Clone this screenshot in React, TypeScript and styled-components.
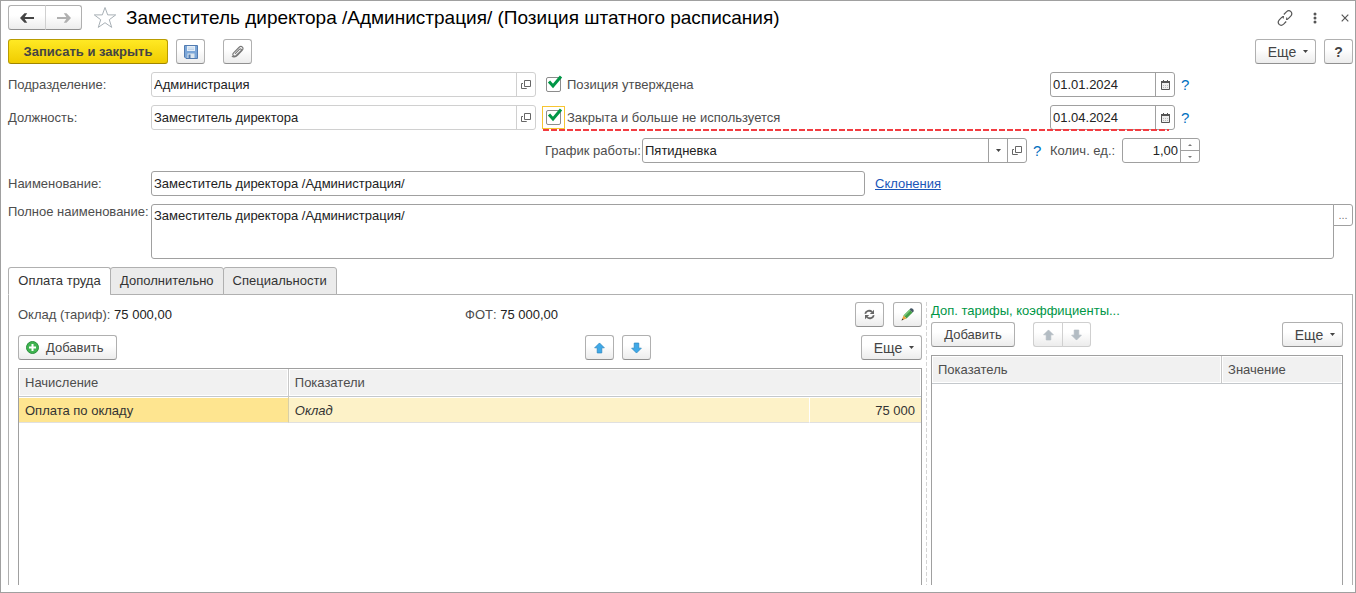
import React, { useState } from "react";
import styled, { createGlobalStyle, css } from "styled-components";

const GlobalStyle = createGlobalStyle`
  *, *::before, *::after { box-sizing: border-box; }
  body {
    margin: 0;
    background: #fff;
    color: #333;
    font: 13px/16px "Liberation Sans", Arial, sans-serif;
  }
  button, input, select, textarea { font: inherit; color: inherit; margin: 0; }
`;

const Window = styled.main`
  display: flex;
  flex-direction: column;
  min-height: 100vh;
  padding: 4px 2px 7px 7px;
  border: 1px solid #a0a0a0;
`;

const TitleBar = styled.header`
  display: flex;
  align-items: center;
  height: 25px;
`;

const Title = styled.h1`
  flex: 1;
  margin: 0 0 0 9px;
  color: #000;
  font-size: 19px;
  line-height: 24px;
  font-weight: 400;
  white-space: nowrap;
`;

const WindowTools = styled.div`
  display: flex;
  align-items: center;
  gap: 14px;
`;

const PlainButton = styled.button`
  display: flex;
  align-items: center;
  justify-content: center;
  width: 16px;
  height: 20px;
  padding: 0;
  border: 0;
  background: none;
`;

const CommandBar = styled.div`
  display: flex;
  align-items: center;
  gap: 8px;
  margin-top: 9px;
`;

const Spacer = styled.div<{ $width?: number }>`
  ${(p) => (p.$width ? `width: ${p.$width}px;` : "flex: 1;")}
`;

const Button = styled.button<{ $width: number; $primary?: boolean; $bold?: boolean }>`
  display: inline-flex;
  align-items: center;
  justify-content: center;
  flex: none;
  gap: 7px;
  width: ${(p) => p.$width}px;
  height: 25px;
  padding: 0;
  border: 1px solid #b0b0b0;
  border-bottom-color: #909090;
  border-radius: 3px;
  background: linear-gradient(#fff 40%, #ececec);
  color: #444;
  white-space: nowrap;
  ${(p) => p.$bold && css`font-size: 14px; font-weight: 700;`}
  ${(p) =>
    p.$primary &&
    css`
      border-color: #b99c00;
      border-bottom-color: #a08600;
      background: linear-gradient(#ffe924, #f0cc00);
      font-weight: 700;
    `}
`;

const AddButton = styled(Button)`
  justify-content: flex-start;
  padding-left: 7px;
`;

const ButtonPair = styled.div<{ $faded?: boolean }>`
  display: flex;
  flex: none;
  & > button + button { border-left-color: #d0d0d0; margin-left: -1px; border-radius: 0 3px 3px 0; }
  & > button:first-child { border-radius: 3px 0 0 3px; border-right-color: #d0d0d0; }
  ${(p) => p.$faded && css`& > button { border-color: #cfcfcf; }`}
`;

const Form = styled.form`
  display: flex;
  flex-direction: column;
  gap: 8px;
  margin-top: 8px;
`;

const FormGrid = styled.div`
  display: grid;
  grid-template-columns: minmax(0, 528fr) minmax(0, 658fr);
  column-gap: 6px;
  row-gap: 8px;
  padding-right: 153px;
`;

const FormRow = styled.div`
  display: flex;
  align-items: center;
  min-width: 0;
`;

const SettingRow = styled(FormRow)<{ $invalid?: boolean }>`
  position: relative;
  padding-left: 3px;
  ${(p) =>
    p.$invalid &&
    css`
      &::after {
        content: "";
        position: absolute;
        left: 1px;
        right: 31px;
        bottom: -1px;
        height: 2px;
        background: repeating-linear-gradient(90deg, #f23c41 0 6px, transparent 6px 8px);
      }
    `}
`;

const ScheduleRow = styled(FormRow)`
  grid-column: 2;
  padding-left: 3px;
`;

const NameRow = styled.div`
  display: grid;
  grid-template-columns: minmax(0, 857fr) minmax(0, 478fr);
  column-gap: 10px;
  align-items: center;
`;

const FullNameRow = styled(FormRow)`
  align-items: flex-start;
`;

const Label = styled.label<{ $width?: number }>`
  flex: none;
  width: ${(p) => (p.$width ? `${p.$width}px` : "auto")};
  color: #4d4d4d;
  white-space: nowrap;
`;

const Field = styled.div<{ $muted?: boolean; $width?: number }>`
  --edge: ${(p) => (p.$muted ? "#d0d0d0" : "#a0a0a0")};
  display: flex;
  ${(p) => (p.$width ? `flex: none; width: ${p.$width}px;` : "flex: 1;")}
  min-width: 0;
  height: 25px;
  border: 1px solid var(--edge);
  border-radius: 3px;
  background: #fff;
`;

const controlText = css`
  flex: 1;
  min-width: 0;
  padding: 0 2px;
  border: 0;
  outline: 0;
  background: none;
  color: #222;
`;

const TextInput = styled.input<{ $right?: boolean }>`
  ${controlText}
  text-align: ${(p) => (p.$right ? "right" : "left")};
`;

const Select = styled.select`
  ${controlText}
  appearance: none;
`;

const FieldButton = styled.button`
  display: flex;
  align-items: center;
  justify-content: center;
  flex: none;
  width: 19px;
  padding: 0;
  border: 0;
  border-left: 1px solid var(--edge);
  background: none;
`;

const Stepper = styled.div`
  display: flex;
  flex-direction: column;
  flex: none;
  width: 19px;
  border-left: 1px solid var(--edge);
`;

const StepButton = styled.button`
  display: flex;
  flex: 1;
  align-items: center;
  justify-content: center;
  padding: 0;
  border: 0;
  background: none;
  & + & { border-top: 1px solid var(--edge); }
`;

const TextArea = styled.textarea`
  flex: 1;
  min-width: 0;
  height: 55px;
  padding: 3px 2px;
  border: 1px solid #a0a0a0;
  border-radius: 3px 0 3px 3px;
  outline: 0;
  resize: none;
  color: #222;
`;

const AreaButton = styled.button`
  width: 20px;
  height: 22px;
  margin-left: -1px;
  padding: 0;
  border: 1px solid #a0a0a0;
  border-radius: 0 3px 3px 0;
  background: #fff;
  color: #777;
  font-size: 11px;
`;

const CheckLabel = styled.label`
  display: flex;
  flex: 1;
  align-items: center;
  gap: 6px;
  padding-left: 1px;
  color: #4d4d4d;
  white-space: nowrap;
`;

const CheckBox = styled.span<{ $focused?: boolean }>`
  position: relative;
  display: flex;
  width: 15px;
  height: 15px;
  ${(p) => p.$focused && css`outline: 1px solid #f7c531; outline-offset: 3px;`}
  input {
    appearance: none;
    width: 15px;
    height: 15px;
    border: 1px solid #8c8c8c;
    border-radius: 2px;
    outline: 0;
  }
  svg { position: absolute; left: 1px; top: -2px; pointer-events: none; }
  input:not(:checked) + svg { display: none; }
`;

const EndGroup = styled.div`
  display: flex;
  align-items: center;
  justify-content: space-between;
  flex: none;
  width: 150px;
`;

const HelpLink = styled.a`
  flex: 1;
  padding-left: 6px;
  color: #0070c0;
  font-size: 15px;
  text-decoration: none;
`;

const ScheduleHelp = styled(HelpLink)`
  flex: none;
  width: 23px;
`;

const Link = styled.a`
  color: #1a56b8;
`;

const Tabs = styled.div`
  display: flex;
  margin-top: 8px;
`;

const Tab = styled.button<{ $active: boolean }>`
  position: relative;
  height: 28px;
  min-width: 103px;
  margin: 0 -1px -1px 0;
  padding: 0 9px;
  border: 1px solid #b0b0b0;
  border-radius: 3px 3px 0 0;
  background: #ebebeb;
  color: #333;
  ${(p) => p.$active && css`border-bottom-color: #fff; background: #fff;`}
`;

const TabPanel = styled.section`
  display: grid;
  flex: 1;
  grid-template-columns: minmax(0, 904fr) 9px minmax(0, 412fr);
  padding: 7px 9px 0;
  border: 1px solid #b0b0b0;
  border-bottom: 0;
`;

const Pane = styled.div`
  display: flex;
  flex-direction: column;
  min-width: 0;
`;

const Splitter = styled.div`
  width: 1px;
  margin-left: 4px;
  background: repeating-linear-gradient(#d4d4d4 0 4px, transparent 4px 6px);
`;

const Totals = styled.div`
  display: grid;
  grid-template-columns: minmax(0, 447fr) minmax(0, 390fr) 67px;
  align-items: center;
  height: 25px;
`;

const Total = styled.span`
  color: #4d4d4d;
  b { color: #222; font-weight: 400; }
`;

const TotalButtons = styled.div`
  display: flex;
  justify-content: space-between;
`;

const PaneBar = styled.div<{ $top: number }>`
  display: flex;
  gap: 8px;
  margin-top: ${(p) => p.$top}px;
`;

const BarSide = styled.div<{ $grow: number; $end?: boolean }>`
  display: flex;
  flex: ${(p) => p.$grow} 1 0;
  justify-content: ${(p) => (p.$end ? "flex-end" : "flex-start")};
`;

const PaneTitle = styled.h2`
  margin: 0;
  color: #009646;
  font-size: 13px;
  line-height: 18px;
  font-weight: 400;
`;

const TableFrame = styled.div`
  flex: 1;
  margin-top: 8px;
  border: 1px solid #a0a0a0;
  border-bottom: 0;
`;

const Table = styled.table`
  width: 100%;
  border-collapse: separate;
  border-spacing: 0;
  table-layout: fixed;
`;

const Column = styled.col<{ $share?: number }>`
  width: ${(p) => (p.$share ? `${p.$share}%` : "auto")};
`;

const HeadCell = styled.th`
  height: 28px;
  padding: 0 6px;
  border-bottom: 1px solid #c4c8cc;
  border-left: 1px solid #c8c8c8;
  background: #f1f1f1;
  box-shadow: inset 0 0 0 1px #fff;
  color: #4d4d4d;
  font-weight: 400;
  text-align: left;
  &:first-child { border-left: 0; }
`;

const Cell = styled.td<{ $current?: boolean; $number?: boolean; $formula?: boolean }>`
  height: 26px;
  padding: 2px 6px 0;
  border-bottom: 1px solid #e0e0e0;
  border-left: 1px solid ${(p) => (p.$number ? "#fff" : "#d8cfa8")};
  background: ${(p) => (p.$current ? "#fee590" : "#fdf2c8")};
  box-shadow: inset 0 1px 0 #fff;
  color: #333;
  font-style: ${(p) => (p.$formula ? "italic" : "normal")};
  text-align: ${(p) => (p.$number ? "right" : "left")};
  &:first-child { border-left: 0; }
`;

const NavArrow = ({ back }: { back?: boolean }) => (
  <svg width="14" height="10" viewBox="0 0 14 10" fill={back ? "#444" : "#b0b0b0"}>
    {back ? <path d="M0 5L4.500 .3H7.200L4.700 3.900H14V6.100H4.700L7.200 9.700H4.500z" /> : <path d="M14 5L9.500 .3H6.800L9.300 3.900H0V6.100H9.300L6.800 9.700H9.500z" />}
  </svg>
);

const StarIcon = () => (
  <svg width="24" height="23" viewBox="0 0 24 23" fill="#fff" stroke="#a8b0b6">
    <path d="M12 1.500l2.700 7.400h8l-6.400 4.800 2.400 7.700L12 16.700l-6.700 4.700 2.400-7.700L1.300 8.900h8z" />
  </svg>
);

const ChainIcon = () => (
  <svg width="16" height="16" viewBox="0 0 16 16" fill="none" stroke="#555" strokeWidth="1.200">
    <path d="M6.800 4.500l2.600-2.600c1.500-1.400 3.100-1.500 4.500-.3 1.200 1.300 1.100 3-.2 4.500l-2.400 2.500c-.7.6-1.500.9-2.300.8M6.600 8.400c-.5-.6-.7-1.300-.6-2" />
    <path d="M9.200 11.500l-2.600 2.600c-1.500 1.400-3.100 1.500-4.500.3-1.200-1.300-1.100-3 .2-4.500l2.400-2.500c.7-.6 1.500-.9 2.300-.8M9.400 7.600c.5.6.7 1.300.6 2" />
  </svg>
);

const DotsIcon = () => (
  <svg width="4" height="12" viewBox="0 0 4 12" fill="#555">
    <circle cx="2" cy="2" r="1.500" /><circle cx="2" cy="6" r="1.500" /><circle cx="2" cy="10" r="1.500" />
  </svg>
);

const CloseIcon = () => (
  <svg width="8" height="8" viewBox="0 0 8 8" stroke="#555" strokeWidth="1.200">
    <path d="M.7.7l6.600 6.600M7.300.7L.7 7.300" />
  </svg>
);

const SaveIcon = () => (
  <svg width="14" height="14" viewBox="0 0 14 14">
    <path d="M.5.5h13v13H2l-1.500-1.500z" fill="#7ba6d8" stroke="#527bb0" />
    <path d="M3 1h8v5H3z" fill="#e4eef8" />
    <path d="M4 3h6M4 4.500h6" stroke="#a9c3df" strokeWidth=".6" />
    <path d="M3.500 8.500h7V13h-7z" fill="#dce6ee" />
    <path d="M4.500 9.500h2V13h-2z" fill="#527bb0" />
  </svg>
);

const ClipIcon = () => (
  <svg width="13" height="13" viewBox="0 0 14 14" fill="none" stroke="#777" strokeWidth="1.200">
    <path d="M4.300 9.500l4.700-4.700c1.500-1.400 3 .1 1.600 1.600l-5 4.800c-2.300 2-4.900-.5-2.800-2.800l5.700-5.700c2.900-2.700 6 .4 3.300 3.300l-4.600 4.800c-2.600 2.700-5.200 2.400-6.200 1" />
  </svg>
);

const Caret = () => (
  <svg width="5" height="3" viewBox="0 0 5 3" fill="#444"><path d="M0 0h5L2.500 3z" /></svg>
);

const OpenIcon = () => (
  <svg width="10" height="10" viewBox="0 0 10 10" fill="none" stroke="#666">
    <path d="M3.500.5h6v6h-6zM2 3.500H.5v5h5V8" />
  </svg>
);

const CalendarIcon = () => (
  <svg width="9" height="10" viewBox="0 0 9 10">
    <path d="M.5 1.500h8v8h-8z" fill="#eee" stroke="#555" />
    <path d="M0 1h9v2H0z" fill="#555" />
    <path d="M2.500 0v2M6.500 0v2" stroke="#555" />
    <path d="M2 5.500h5M2 7.500h5" stroke="#bbb" strokeDasharray="1 1" />
  </svg>
);

const CheckIcon = () => (
  <svg width="16" height="15" viewBox="0 0 16 15" fill="none" stroke="#009646" strokeWidth="3">
    <path d="M2 6.500l4 4.500L14 1.500" />
  </svg>
);

const StepIcon = ({ down }: { down?: boolean }) => (
  <svg width="4" height="2" viewBox="0 0 4 2" fill="#777">
    <path d={down ? "M0 0h4L2 2z" : "M0 2h4L2 0z"} />
  </svg>
);

const ArrowIcon = ({ down, muted }: { down?: boolean; muted?: boolean }) => (
  <svg
    width="11"
    height="12"
    viewBox="0 0 12 12"
    fill={muted ? "#b3bcc3" : "#3fa9e8"}
    stroke={muted ? "#b3bcc3" : "#2c86c0"}
    strokeWidth=".8"
    strokeLinejoin="round"
  >
    <path d={down ? "M6 11.500L.7 6.200h2.800V.6h5v5.600h2.800z" : "M6 .5l5.300 5.300H8.500v5.600h-5V5.800H.7z"} />
  </svg>
);

const AddIcon = () => (
  <svg width="13" height="13" viewBox="0 0 13 13">
    <circle cx="6.500" cy="6.500" r="6" fill="#3fb450" stroke="#2b8f3d" />
    <path d="M6.500 3v7M3 6.500h7" stroke="#fff" strokeWidth="2" />
  </svg>
);

const RefreshIcon = () => (
  <svg width="11" height="11" viewBox="0 0 11 11">
    <path d="M1.200 4.700C2 1.700 5.800.8 8 2.900M9.800 6.300C9 9.300 5.200 10.200 3 8.100" fill="none" stroke="#666" strokeWidth="1.800" />
    <path d="M10 .7v4.200H5.800zM1 10.300V6.100h4.200z" fill="#666" />
  </svg>
);

const PencilIcon = () => (
  <svg width="13" height="13" viewBox="0 0 14 14">
    <path d="M2.700 8l6.500-6.500 3.300 3.300L6 11.300z" fill="#45a049" />
    <path d="M2.700 8l6.500-6.500 1.200 1.200-6.500 6.500z" fill="#7cc77c" />
    <path d="M9.200 1.500L10.400.4c1.500-.8 3.900 1.500 3.200 3.100l-1.100 1.300z" fill="#445765" />
    <path d="M2.700 8L6 11.300 .8 13.200z" fill="#e6a23c" />
    <path d="M1.500 11.300l1.300 1.300L.5 13.500z" fill="#333" />
  </svg>
);

const MoreText = styled.span`
  padding-left: 5px;
  font-size: 14px;
`;

const MoreButton = () => (
  <Button type="button" $width={61}>
    <MoreText>Еще</MoreText>
    <Caret />
  </Button>
);

const tabNames = ["Оплата труда", "Дополнительно", "Специальности"];

function LookupField({ id, value }: { id: string; value: string }) {
  return (
    <Field $muted>
      <TextInput id={id} defaultValue={value} />
      <FieldButton type="button" aria-label="Открыть"><OpenIcon /></FieldButton>
    </Field>
  );
}

function DateField({ label, value }: { label: string; value: string }) {
  return (
    <EndGroup>
      <Field $width={125}>
        <TextInput aria-label={label} defaultValue={value} />
        <FieldButton type="button" aria-label="Выбрать дату"><CalendarIcon /></FieldButton>
      </Field>
      <HelpLink href="#help">?</HelpLink>
    </EndGroup>
  );
}

function Check({ text, focused }: { text: string; focused?: boolean }) {
  return (
    <CheckLabel>
      <CheckBox $focused={focused}>
        <input type="checkbox" defaultChecked />
        <CheckIcon />
      </CheckBox>
      {text}
    </CheckLabel>
  );
}

export default function App() {
  const [tab, setTab] = useState(0);

  return (
    <Window>
      <GlobalStyle />
      <TitleBar>
        <ButtonPair>
          <Button $width={38} aria-label="Назад"><NavArrow back /></Button>
          <Button $width={37} aria-label="Вперед"><NavArrow /></Button>
        </ButtonPair>
        <Spacer $width={11} />
        <StarIcon />
        <Title>Заместитель директора /Администрация/ (Позиция штатного расписания)</Title>
        <WindowTools>
          <PlainButton aria-label="Ссылка"><ChainIcon /></PlainButton>
          <PlainButton aria-label="Меню"><DotsIcon /></PlainButton>
          <PlainButton aria-label="Закрыть"><CloseIcon /></PlainButton>
        </WindowTools>
      </TitleBar>

      <CommandBar>
        <Button $width={160} $primary>Записать и закрыть</Button>
        <Button $width={29} aria-label="Записать"><SaveIcon /></Button>
        <Spacer $width={2} />
        <Button $width={29} aria-label="Файлы"><ClipIcon /></Button>
        <Spacer />
        <MoreButton />
        <Button $width={29} $bold>?</Button>
      </CommandBar>

      <Form onSubmit={(e) => e.preventDefault()}>
        <FormGrid>
          <FormRow>
            <Label htmlFor="unit" $width={143}>Подразделение:</Label>
            <LookupField id="unit" value="Администрация" />
          </FormRow>
          <SettingRow>
            <Check text="Позиция утверждена" />
            <DateField label="Дата утверждения" value="01.01.2024" />
          </SettingRow>
          <FormRow>
            <Label htmlFor="post" $width={143}>Должность:</Label>
            <LookupField id="post" value="Заместитель директора" />
          </FormRow>
          <SettingRow $invalid>
            <Check text="Закрыта и больше не используется" focused />
            <DateField label="Дата закрытия" value="01.04.2024" />
          </SettingRow>
          <ScheduleRow>
            <Label htmlFor="schedule" $width={97}>График работы:</Label>
            <Field>
              <Select id="schedule" defaultValue="Пятидневка">
                <option>Пятидневка</option>
              </Select>
              <FieldButton type="button" aria-label="Выбрать"><Caret /></FieldButton>
              <FieldButton type="button" aria-label="Открыть"><OpenIcon /></FieldButton>
            </Field>
            <ScheduleHelp href="#help">?</ScheduleHelp>
            <EndGroup>
              <Label htmlFor="count">Колич. ед.:</Label>
              <Field $width={78}>
                <TextInput id="count" defaultValue="1,00" $right />
                <Stepper>
                  <StepButton type="button" aria-label="Больше"><StepIcon /></StepButton>
                  <StepButton type="button" aria-label="Меньше"><StepIcon down /></StepButton>
                </Stepper>
              </Field>
            </EndGroup>
          </ScheduleRow>
        </FormGrid>

        <NameRow>
          <FormRow>
            <Label htmlFor="name" $width={143}>Наименование:</Label>
            <Field>
              <TextInput id="name" defaultValue="Заместитель директора /Администрация/" />
            </Field>
          </FormRow>
          <div><Link href="#cases">Склонения</Link></div>
        </NameRow>

        <FullNameRow>
          <Label htmlFor="fullname" $width={143}>Полное наименование:</Label>
          <TextArea id="fullname" defaultValue="Заместитель директора /Администрация/" />
          <AreaButton type="button" aria-label="Редактировать">...</AreaButton>
        </FullNameRow>
      </Form>

      <Tabs role="tablist">
        {tabNames.map((name, i) => (
          <Tab key={name} role="tab" aria-selected={tab === i} $active={tab === i} onClick={() => setTab(i)}>
            {name}
          </Tab>
        ))}
      </Tabs>

      <TabPanel role="tabpanel">
        <Pane>
          <Totals>
            <Total>Оклад (тариф): <b>75 000,00</b></Total>
            <Total>ФОТ: <b>75 000,00</b></Total>
            <TotalButtons>
              <Button $width={29} aria-label="Обновить"><RefreshIcon /></Button>
              <Button $width={29} aria-label="Изменить"><PencilIcon /></Button>
            </TotalButtons>
          </Totals>
          <PaneBar $top={8}>
            <BarSide $grow={559}>
              <AddButton $width={99}><AddIcon />Добавить</AddButton>
            </BarSide>
            <Button $width={29} aria-label="Вверх"><ArrowIcon /></Button>
            <Button $width={29} aria-label="Вниз"><ArrowIcon down /></Button>
            <BarSide $grow={263} $end><MoreButton /></BarSide>
          </PaneBar>
          <TableFrame>
            <Table>
              <colgroup>
                <Column $share={29.8} />
                <Column />
                <Column $share={12.4} />
              </colgroup>
              <thead>
                <tr>
                  <HeadCell>Начисление</HeadCell>
                  <HeadCell colSpan={2}>Показатели</HeadCell>
                </tr>
              </thead>
              <tbody>
                <tr>
                  <Cell $current>Оплата по окладу</Cell>
                  <Cell $formula>Оклад</Cell>
                  <Cell $number>75 000</Cell>
                </tr>
              </tbody>
            </Table>
          </TableFrame>
        </Pane>
        <Splitter />
        <Pane>
          <PaneTitle>Доп. тарифы, коэффициенты...</PaneTitle>
          <PaneBar $top={2}>
            <Button $width={84}>Добавить</Button>
            <Spacer $width={2} />
            <ButtonPair $faded>
              <Button $width={30} aria-label="Вверх" disabled><ArrowIcon muted /></Button>
              <Button $width={29} aria-label="Вниз" disabled><ArrowIcon down muted /></Button>
            </ButtonPair>
            <Spacer />
            <MoreButton />
          </PaneBar>
          <TableFrame>
            <Table>
              <colgroup>
                <Column $share={70.5} />
                <Column />
              </colgroup>
              <thead>
                <tr>
                  <HeadCell>Показатель</HeadCell>
                  <HeadCell>Значение</HeadCell>
                </tr>
              </thead>
            </Table>
          </TableFrame>
        </Pane>
      </TabPanel>
    </Window>
  );
}
